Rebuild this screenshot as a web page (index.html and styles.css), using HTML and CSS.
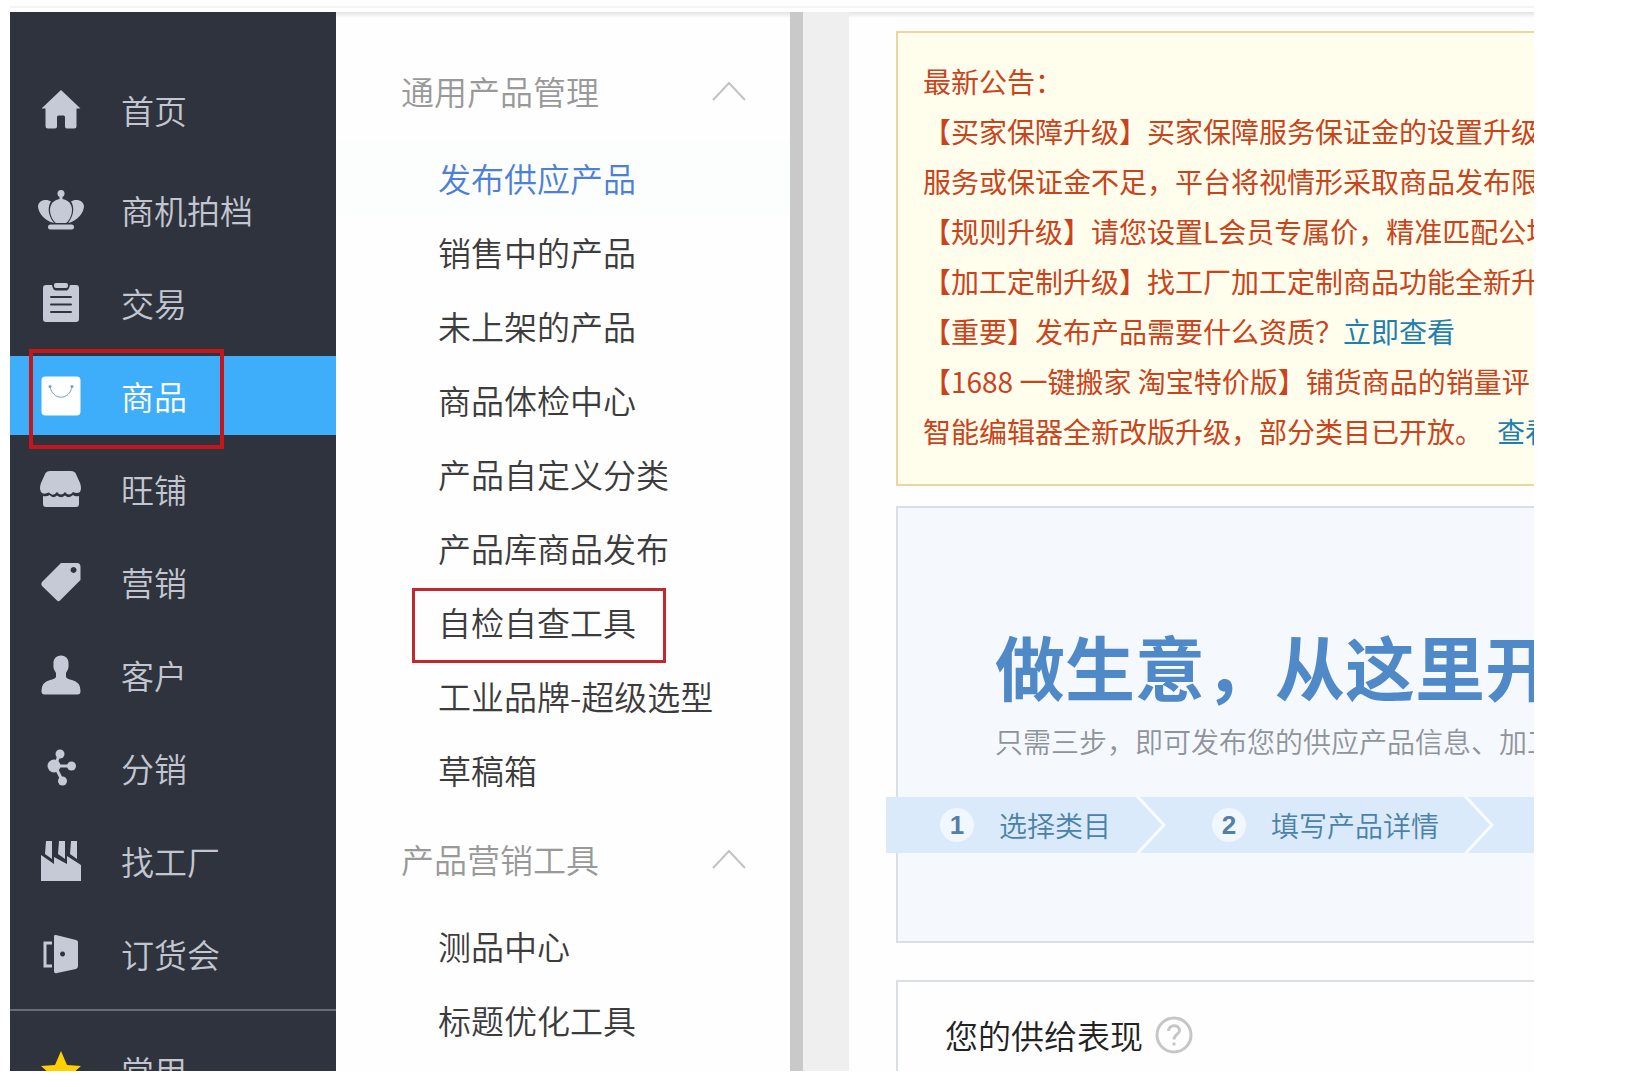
FILE: index.html
```html
<!DOCTYPE html>
<html lang="zh-CN">
<head>
<meta charset="utf-8">
<meta name="viewport" content="width=device-width, initial-scale=1">
<title>商品管理</title>
<link rel="stylesheet" href="styles.css">
</head>
<body>
<div class="page">
  <div class="topbar"></div>
  <div class="workspace">
    <nav class="sidebar" aria-label="主导航">
      <a class="nav-item nav-home" href="#">
        <svg class="nav-icon" viewBox="0 0 48 48"><path d="M24 4 L4.500 22.500 L8.500 22.500 V40 Q8.500 42.500 11 42.500 H18 Q20 42.500 20 40.500 V31 Q20 29.500 21.500 29.500 H26.500 Q28 29.500 28 31 V40.500 Q28 42.500 30 42.500 H37 Q39.500 42.500 39.500 40 V22.500 H43.500 Z"/></svg>
        <span>首页</span></a>
      <a class="nav-item" href="#">
        <svg class="nav-icon" viewBox="0 0 48 48"><circle cx="24" cy="7.500" r="3.500"/><path d="M22.500 8h3v7h-3z"/><path d="M24 13 C31 13 35 18 35 24 C35 30 31 36 29 37 H19 C17 36 13 30 13 24 C13 18 17 13 24 13Z"/><path d="M14 15.500 C11 20 10 28 17 37 C7 35 1 26 1 20 C2 13 11 13 14 15.500Z"/><path d="M34 15.500 C37 20 38 28 31 37 C41 35 47 26 47 20 C46 13 37 13 34 15.500Z"/><rect x="11" y="38.500" width="26" height="5" rx="2.500"/></svg>
        <span>商机拍档</span></a>
      <a class="nav-item" href="#">
        <svg class="nav-icon" viewBox="0 0 48 48"><path d="M9 6 H15 C16 11 18 11.500 19 11.500 H29 C31 11.500 32 10 33 6 H39 Q42 6 42 9 V40 Q42 43 39 43 H9 Q6 43 6 40 V9 Q6 6 9 6Z"/><rect x="17" y="4" width="14" height="5" rx="2"/><path class="cut" d="M14 18H34M14 25.500H34M14 33H34"/></svg>
        <span>交易</span></a>
      <a class="nav-item is-active" href="#" aria-current="page">
        <svg class="nav-icon" viewBox="0 0 48 48"><rect x="4.500" y="4.500" width="39" height="39" rx="4"/><path class="smile" d="M13 14 C15 29 33 29 35 14"/><circle class="dot" cx="13" cy="14.500" r="1.500"/><circle class="dot" cx="35" cy="14.500" r="1.500"/></svg>
        <span>商品</span></a>
      <a class="nav-item" href="#">
        <svg class="nav-icon" viewBox="0 0 48 48"><path d="M13 6 H34 Q37 6 38.500 8 L43 18 Q45 23 43 27 Q40 29 36 27 Q32 32 28 27 Q24 32 20 27 Q16 32 12 27.500 Q6 30 4 27 Q2 23 4 18 L8.500 8 Q10 6 13 6Z"/><path d="M6 31 Q10 32 12.500 30 Q16 34 20 30.500 Q24 34 28 30.500 Q32 34 36 30 Q38 32 42 31 V39 Q42 42 39 42 H9 Q6 42 6 39Z"/></svg>
        <span>旺铺</span></a>
      <a class="nav-item" href="#">
        <svg class="nav-icon" viewBox="0 0 48 48"><path fill-rule="evenodd" d="M24 5 H40 Q43.500 5 43.500 9 V22 L23 42.500 Q21.500 44 20 42.500 L5 28 Q3.500 26 5 24Z M36.500 9 a3 3 0 1 0 .1 0Z"/></svg>
        <span>营销</span></a>
      <a class="nav-item" href="#">
        <svg class="nav-icon" viewBox="0 0 48 48"><path d="M24 4.500 C29 4.500 32 8 31.500 13.500 C32 18 30 20 29 22 V26 Q30 28 35 29 Q43.500 31 43.500 40 Q43.500 43.500 40.500 43.500 H7.500 Q4.500 43.500 4.500 40 Q4.500 31 13 29 Q18 28 19 26 V22 C18 20 16 18 16.500 13.500 C16 8 19 4.500 24 4.500Z"/></svg>
        <span>客户</span></a>
      <a class="nav-item" href="#">
        <svg class="nav-icon" viewBox="0 0 48 48"><path class="link" d="M23 9 L18 22 L25 36 M18 22 H34"/><circle cx="23" cy="10" r="4.500"/><circle cx="17" cy="22" r="6.500"/><circle cx="34.500" cy="22" r="4.500"/><circle cx="25.500" cy="37" r="4.500"/></svg>
        <span>分销</span></a>
      <a class="nav-item" href="#">
        <svg class="nav-icon" viewBox="0 0 48 48"><path d="M4 18 L17 27 V20 L30 27 V19 L44 28 V44 H4Z"/><path d="M9 4 H15 V22 L8 17Z M22 4 H28 V22 L21 17Z M34 4 H40 V22 L33 17Z"/></svg>
        <span>找工厂</span></a>
      <a class="nav-item" href="#">
        <svg class="nav-icon" viewBox="0 0 48 48"><path class="frame" d="M15 13 H8 V36 H15"/><path fill-rule="evenodd" d="M17 6 Q17 4.500 19 5 L39 10 Q41 10.500 41 12 V36 Q41 38 39 39 L20 43 Q17 44 17 41Z M25.500 21.500 a2.500 2.500 0 1 0 .1 0Z"/></svg>
        <span>订货会</span></a>
      <a class="nav-item nav-favorite" href="#">
        <svg class="nav-icon star" viewBox="0 0 48 48"><path d="M24 4 L30 18 L44 19 L33 29 L37 44 L24 36 L11 44 L15 29 L4 19 L18 18Z"/></svg>
        <span>常用</span></a>
    </nav>

    <nav class="submenu" aria-label="商品菜单">
      <section class="group">
        <button class="group-title" type="button" aria-expanded="true">通用产品管理
          <svg class="chevron" viewBox="0 0 34 20"><path d="M1 19 L17 2 L33 19"/></svg></button>
        <ul class="group-list">
          <li><a class="is-current" href="#">发布供应产品</a></li>
          <li><a href="#">销售中的产品</a></li>
          <li><a href="#">未上架的产品</a></li>
          <li><a href="#">商品体检中心</a></li>
          <li><a href="#">产品自定义分类</a></li>
          <li><a href="#">产品库商品发布</a></li>
          <li><a class="is-marked" href="#">自检自查工具</a></li>
          <li><a href="#">工业品牌-超级选型</a></li>
          <li><a href="#">草稿箱</a></li>
        </ul>
      </section>
      <section class="group">
        <button class="group-title" type="button" aria-expanded="true">产品营销工具
          <svg class="chevron" viewBox="0 0 34 20"><path d="M1 19 L17 2 L33 19"/></svg></button>
        <ul class="group-list">
          <li><a href="#">测品中心</a></li>
          <li><a href="#">标题优化工具</a></li>
        </ul>
      </section>
    </nav>

    <main class="content">
      <section class="notice">
        <p>最新公告：</p>
        <p>【买家保障升级】买家保障服务保证金的设置升级</p>
        <p>服务或保证金不足，平台将视情形采取商品发布限</p>
        <p>【规则升级】请您设置L会员专属价，精准匹配公场</p>
        <p>【加工定制升级】找工厂加工定制商品功能全新升</p>
        <p>【重要】发布产品需要什么资质？<a href="#">立即查看</a></p>
        <p>【1688 一键搬家 淘宝特价版】铺货商品的销量评</p>
        <p>智能编辑器全新改版升级，部分类目已开放。<a class="more" href="#">查看</a></p>
      </section>

      <section class="banner">
        <h1>做生意，从这里开</h1>
        <p class="lead">只需三步，即可发布您的供应产品信息、加工</p>
        <ol class="steps">
          <li><span class="num">1</span>选择类目<svg class="arrow" viewBox="0 0 30 56"><path d="M1 -1 L28 28 L1 57"/></svg></li>
          <li><span class="num">2</span>填写产品详情<svg class="arrow" viewBox="0 0 30 56"><path d="M1 -1 L28 28 L1 57"/></svg></li>
        </ol>
      </section>

      <section class="supply">
        <h2>您的供给表现</h2>
        <svg class="help" viewBox="0 0 38 38" role="img" aria-label="帮助"><circle cx="19" cy="19" r="17"/><path d="M13.500 15 C13.500 8 24.500 8 24.500 14.500 C24.500 18.500 19 18.500 19 23.500"/><path d="M19 26.500 V29.500"/></svg>
      </section>
    </main>
  </div>
</div>
</body>
</html>
```
FILE: styles.css
```css
*,
*::after { box-sizing: border-box; }

body,
h1,
h2,
p,
ul,
ol {
  margin: 0;
  padding: 0;
}

ul,
ol { list-style: none; }

a { text-decoration: none; }

body {
  background: #fff;
  font-family: "Noto Sans CJK SC", "Liberation Sans", sans-serif;
  font-weight: 350;
}

.page {
  display: flex;
  flex-direction: column;
  height: 100vh;
  padding: 0 92px 16px 10px;
  overflow: hidden;
}

.topbar {
  flex: none;
  height: 12px;
  background: linear-gradient(#fff 6px, #f3f4f5 6px, #f3f4f5 8px, #fff 8px);
}

.workspace {
  display: flex;
  flex: 1;
  min-height: 0;
  overflow: hidden;
  background: linear-gradient(#e4e4e4, #fefefe 6px);
}

/* Primary navigation */
.sidebar {
  display: flex;
  flex: none;
  flex-direction: column;
  gap: 14px;
  width: 326px;
  padding-top: 58px;
  overflow: hidden;
  background: #2f333d;
}

.nav-item {
  position: relative;
  display: flex;
  flex: none;
  align-items: center;
  gap: 36px;
  height: 79px;
  padding-left: 27px;
  color: #c3c6d0;
  font-size: 33px;
}

.nav-home { margin-bottom: 7px; }

.nav-item.is-active {
  background: #3eadfa;
  color: #fff;
}

.nav-item.is-active::after {
  content: "";
  position: absolute;
  top: -7px;
  left: 19px;
  width: 195px;
  height: 100px;
  border: 4px solid #c5161d;
}

.nav-favorite {
  height: 101px;
  margin-top: 2px;
  border-top: 2px solid #6a6d73;
  padding-top: 20px;
}

.nav-icon {
  width: 48px;
  height: 48px;
  fill: #c6cad6;
}

.is-active .nav-icon { fill: #fff; }

.star { fill: #ffcf00; }

.cut {
  fill: none;
  stroke: #2f333d;
  stroke-width: 2;
  stroke-linecap: round;
}

.smile {
  fill: none;
  stroke: #6aa3cd;
  stroke-width: 1;
}

.dot { fill: #6aa3cd; }

.link,
.frame {
  fill: none;
  stroke: #c6cad6;
  stroke-width: 3;
}

/* Secondary navigation */
.submenu {
  flex: none;
  width: 467px;
  padding-top: 42px;
  border-right: 13px solid #c9c9c9;
}

.group + .group { margin-top: 15px; }

.group-title {
  display: flex;
  align-items: center;
  justify-content: space-between;
  width: 100%;
  height: 74px;
  margin-bottom: 13px;
  padding: 0 44px 0 65px;
  border: 0;
  background: none;
  color: #999;
  font: inherit;
  font-size: 33px;
}

.chevron {
  width: 34px;
  height: 20px;
  fill: none;
  stroke: #c2c2c2;
  stroke-width: 2;
}

.group-list a {
  position: relative;
  display: flex;
  align-items: center;
  height: 74px;
  padding-left: 102px;
  color: #3c3c3c;
  font-size: 33px;
}

.group-list .is-current {
  background: #fcfdfd;
  color: #4e7fd6;
}

.group-list .is-marked::after {
  content: "";
  position: absolute;
  top: 3px;
  left: 76px;
  width: 254px;
  height: 75px;
  border: 3px solid #c4282c;
}

/* Main column */
.content {
  flex: 1;
  min-width: 0;
  padding: 19px 0 0 47px;
  border-left: 46px solid #efefef;
  overflow: hidden;
  white-space: nowrap;
}

.notice {
  padding: 23px 0 28px 25px;
  border: 2px solid #ecd6a0;
  border-right: 0;
  background: #fffdec;
  color: #c9441c;
  font-size: 28px;
  font-weight: 400;
  line-height: 50px;
  overflow: hidden;
}

.notice a { color: #1f7fae; }

.notice .more { margin-left: 14px; }

.banner {
  margin-top: 20px;
  padding: 118px 0 88px;
  border: 2px solid #d9dfe5;
  border-right: 0;
  background: #f5f9fe;
}

.banner h1 {
  padding-left: 97px;
  color: #5089c8;
  font-size: 70px;
  font-weight: 700;
  line-height: 80px;
}

.lead {
  margin-top: 15px;
  padding-left: 97px;
  color: #8f949c;
  font-size: 28px;
  line-height: 40px;
}

.steps {
  display: flex;
  height: 56px;
  margin: 36px 0 0 -12px;
  padding-left: 8px;
  background: #daeafa;
  color: #4b82a8;
  font-size: 28px;
}

.steps li {
  display: flex;
  flex: none;
  align-items: center;
  gap: 25px;
  padding-left: 46px;
}

.num {
  width: 34px;
  height: 34px;
  border-radius: 50%;
  background: #f1f7fe;
  color: #557fa6;
  font-family: "Liberation Sans", sans-serif;
  font-size: 26px;
  font-weight: 700;
  line-height: 34px;
  text-align: center;
}

.arrow {
  width: 30px;
  height: 56px;
  fill: none;
  stroke: #f8fcff;
  stroke-width: 3;
}

.supply {
  display: flex;
  align-items: center;
  gap: 12px;
  height: 200px;
  margin-top: 37px;
  padding: 0 0 90px 47px;
  border: 2px solid #d9dfe5;
  border-right: 0;
}

.supply h2 {
  color: #222;
  font-size: 33px;
  font-weight: 350;
  line-height: 40px;
}

.help {
  width: 38px;
  height: 38px;
  fill: none;
  stroke: #c6c6c6;
  stroke-width: 3;
}
```
